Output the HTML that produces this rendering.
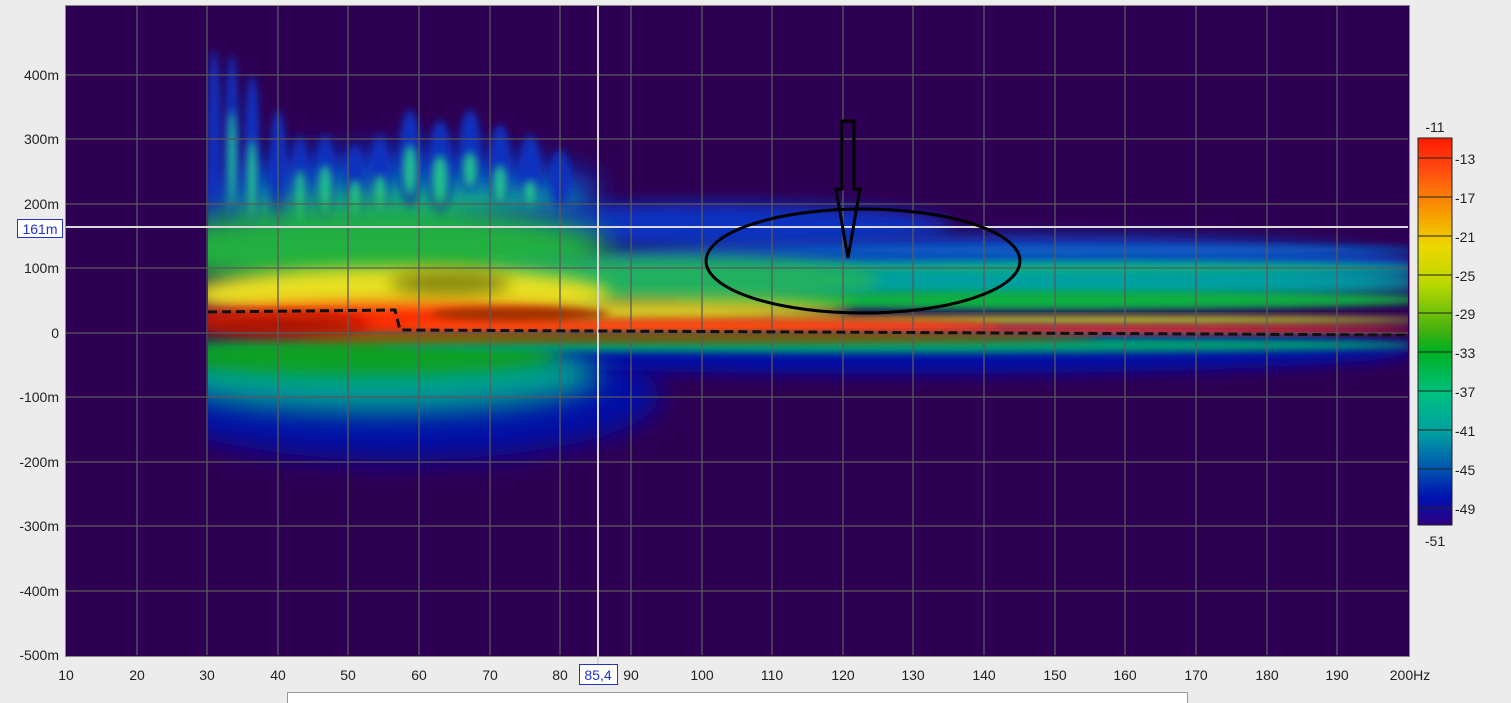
<!DOCTYPE html>
<html><head><style>
html,body{margin:0;padding:0;background:#ececec;width:1511px;height:703px;overflow:hidden;font-family:"Liberation Sans",sans-serif;}
</style></head><body>
<svg width="1511" height="703" xmlns="http://www.w3.org/2000/svg" font-family="Liberation Sans, sans-serif">
<defs>
<filter id="b8" x="-50%" y="-50%" width="200%" height="200%"><feGaussianBlur stdDeviation="8"/></filter>
<filter id="b4" x="-50%" y="-50%" width="200%" height="200%"><feGaussianBlur stdDeviation="4"/></filter>
<filter id="b14" x="-50%" y="-50%" width="200%" height="200%"><feGaussianBlur stdDeviation="14"/></filter>
<clipPath id="cp"><rect x="208" y="6" width="1200" height="649"/></clipPath>
<linearGradient id="cb" x1="0" y1="0" x2="0" y2="1">
<stop offset="0" stop-color="#ff1a00"/><stop offset="0.08" stop-color="#ff4a10"/>
<stop offset="0.2" stop-color="#f7a000"/><stop offset="0.28" stop-color="#ecd800"/>
<stop offset="0.38" stop-color="#b8d800"/><stop offset="0.5" stop-color="#40b010"/>
<stop offset="0.55" stop-color="#00b020"/><stop offset="0.66" stop-color="#00c080"/>
<stop offset="0.76" stop-color="#00a0a0"/><stop offset="0.86" stop-color="#0050b0"/>
<stop offset="0.93" stop-color="#0010b0"/><stop offset="1" stop-color="#300080"/>
</linearGradient>
</defs>
<rect x="0" y="0" width="1511" height="703" fill="#ececec"/>
<rect x="65" y="5" width="1345" height="652" fill="#2e0053"/>
<g clip-path="url(#cp)">
 <!-- lower blue -->
 <ellipse cx="400" cy="395" rx="260" ry="65" fill="#0010a8" filter="url(#b14)"/>
 <ellipse cx="900" cy="350" rx="520" ry="24" fill="#0010a8" filter="url(#b8)"/>
 <ellipse cx="380" cy="375" rx="220" ry="38" fill="#00a090" filter="url(#b14)"/>
 <ellipse cx="360" cy="355" rx="200" ry="20" fill="#10a020" filter="url(#b8)"/>
 <ellipse cx="900" cy="345" rx="520" ry="8" fill="#00a070" filter="url(#b4)"/>
 <!-- upper blue/green cloud -->
 <ellipse cx="400" cy="190" rx="200" ry="40" fill="#1030c0" filter="url(#b14)"/>
 <ellipse cx="400" cy="205" rx="190" ry="25" fill="#10a0a0" filter="url(#b14)"/>
 <!-- fingers -->
 <g fill="#1030c0" filter="url(#b4)">
  <ellipse cx="214" cy="150" rx="7" ry="100"/><ellipse cx="232" cy="150" rx="7" ry="95"/>
  <ellipse cx="252" cy="160" rx="8" ry="85"/><ellipse cx="278" cy="180" rx="9" ry="70"/>
  <ellipse cx="300" cy="190" rx="9" ry="55"/><ellipse cx="325" cy="180" rx="10" ry="45"/>
  <ellipse cx="355" cy="185" rx="10" ry="40"/><ellipse cx="380" cy="175" rx="10" ry="40"/>
  <ellipse cx="410" cy="160" rx="11" ry="50"/><ellipse cx="440" cy="170" rx="12" ry="50"/>
  <ellipse cx="470" cy="150" rx="11" ry="40"/><ellipse cx="500" cy="165" rx="11" ry="40"/>
  <ellipse cx="530" cy="170" rx="11" ry="35"/><ellipse cx="560" cy="180" rx="10" ry="30"/>
 </g>
 <g fill="#20c090" filter="url(#b4)">
  <ellipse cx="232" cy="160" rx="4" ry="50"/><ellipse cx="252" cy="180" rx="5" ry="40"/>
  <ellipse cx="300" cy="200" rx="6" ry="30"/><ellipse cx="325" cy="190" rx="7" ry="25"/>
  <ellipse cx="355" cy="200" rx="7" ry="20"/><ellipse cx="380" cy="195" rx="7" ry="20"/>
  <ellipse cx="410" cy="170" rx="7" ry="25"/><ellipse cx="440" cy="180" rx="8" ry="25"/>
  <ellipse cx="470" cy="170" rx="7" ry="18"/><ellipse cx="500" cy="185" rx="7" ry="20"/>
  <ellipse cx="530" cy="195" rx="7" ry="15"/>
 </g>
 <!-- mid/right stripes -->
 <ellipse cx="700" cy="225" rx="250" ry="22" fill="#1030c0" filter="url(#b8)"/>
 <ellipse cx="1000" cy="265" rx="420" ry="30" fill="#1040c0" filter="url(#b8)"/>
 <ellipse cx="1050" cy="282" rx="380" ry="20" fill="#00a0a0" filter="url(#b8)"/>
 <ellipse cx="1050" cy="300" rx="380" ry="9" fill="#10b040" filter="url(#b4)"/>
 <ellipse cx="1100" cy="268" rx="330" ry="5" fill="#10b080" filter="url(#b4)"/>
 <ellipse cx="1100" cy="250" rx="330" ry="4" fill="#1060c0" filter="url(#b4)"/>
 <!-- green main -->
 <ellipse cx="380" cy="250" rx="230" ry="45" fill="#20b040" filter="url(#b14)"/>
 <ellipse cx="660" cy="280" rx="220" ry="25" fill="#20b060" filter="url(#b8)"/>
 <!-- yellow -->
 <ellipse cx="400" cy="295" rx="210" ry="28" fill="#e8e020" filter="url(#b8)"/>
 <ellipse cx="650" cy="312" rx="200" ry="13" fill="#e0d020" filter="url(#b8)"/>
 <ellipse cx="1100" cy="320" rx="330" ry="4" fill="#c8d020" filter="url(#b4)"/>
 <ellipse cx="450" cy="283" rx="60" ry="13" fill="#8a8a10" filter="url(#b8)"/>
 <!-- red -->
 <ellipse cx="380" cy="320" rx="200" ry="16" fill="#ff2a00" filter="url(#b8)"/>
 <ellipse cx="700" cy="326" rx="300" ry="7" fill="#ff4a10" filter="url(#b4)"/>
 <ellipse cx="1100" cy="330" rx="320" ry="4" fill="#ff4020" filter="url(#b4)"/>
 <ellipse cx="280" cy="325" rx="90" ry="10" fill="#a01000" filter="url(#b8)"/>
 <ellipse cx="520" cy="314" rx="90" ry="7" fill="#a03000" filter="url(#b4)"/>
 <ellipse cx="700" cy="338" rx="400" ry="5" fill="#806000" filter="url(#b4)"/>
</g>
<!-- grid -->
<g stroke="#5a5a5a" stroke-width="1.3">
 <line x1="137" y1="6" x2="137" y2="655"/><line x1="207" y1="6" x2="207" y2="655"/>
 <line x1="278" y1="6" x2="278" y2="655"/><line x1="348" y1="6" x2="348" y2="655"/>
 <line x1="419" y1="6" x2="419" y2="655"/><line x1="490" y1="6" x2="490" y2="655"/>
 <line x1="560" y1="6" x2="560" y2="655"/><line x1="631" y1="6" x2="631" y2="655"/>
 <line x1="702" y1="6" x2="702" y2="655"/><line x1="772" y1="6" x2="772" y2="655"/>
 <line x1="843" y1="6" x2="843" y2="655"/><line x1="913" y1="6" x2="913" y2="655"/>
 <line x1="984" y1="6" x2="984" y2="655"/><line x1="1055" y1="6" x2="1055" y2="655"/>
 <line x1="1125" y1="6" x2="1125" y2="655"/><line x1="1196" y1="6" x2="1196" y2="655"/>
 <line x1="1267" y1="6" x2="1267" y2="655"/><line x1="1337" y1="6" x2="1337" y2="655"/>
 <line x1="66" y1="75" x2="1408" y2="75"/><line x1="66" y1="139" x2="1408" y2="139"/>
 <line x1="66" y1="204" x2="1408" y2="204"/><line x1="66" y1="268" x2="1408" y2="268"/>
 <line x1="66" y1="333" x2="1408" y2="333"/><line x1="66" y1="397" x2="1408" y2="397"/>
 <line x1="66" y1="462" x2="1408" y2="462"/><line x1="66" y1="526" x2="1408" y2="526"/>
 <line x1="66" y1="591" x2="1408" y2="591"/>
</g>
<rect x="65.5" y="5.5" width="1344" height="651" fill="none" stroke="#888" stroke-width="1"/>
<!-- cursor -->
<line x1="66" y1="227" x2="1408" y2="227" stroke="#d8d8d8" stroke-width="2"/>
<line x1="598" y1="6" x2="598" y2="665" stroke="#d8d8d8" stroke-width="2"/>
<!-- dashed -->
<polyline points="208,312 395,310 400,330 1408,335" fill="none" stroke="#111" stroke-width="3" stroke-dasharray="9,5"/>
<!-- ellipse & arrow -->
<ellipse cx="863" cy="261" rx="157" ry="52" fill="none" stroke="#000" stroke-width="3"/>
<path d="M842 121 H854 V189 H860 L848 258 L836 189 H842 Z" fill="none" stroke="#000" stroke-width="3"/>
<!-- y labels -->
<g font-size="14" fill="#222" text-anchor="end">
 <text x="59" y="80">400m</text><text x="59" y="144">300m</text><text x="59" y="209">200m</text>
 <text x="59" y="273">100m</text><text x="59" y="338">0</text><text x="59" y="402">-100m</text>
 <text x="59" y="467">-200m</text><text x="59" y="531">-300m</text><text x="59" y="596">-400m</text>
 <text x="59" y="660">-500m</text>
</g>
<rect x="17.5" y="219.5" width="45" height="18" fill="#fff" stroke="#2233cc"/>
<text x="40" y="234" font-size="14" fill="#2233cc" text-anchor="middle">161m</text>
<!-- x labels -->
<g font-size="14" fill="#222" text-anchor="middle">
 <text x="66" y="680">10</text><text x="137" y="680">20</text><text x="207" y="680">30</text>
 <text x="278" y="680">40</text><text x="348" y="680">50</text><text x="419" y="680">60</text>
 <text x="490" y="680">70</text><text x="560" y="680">80</text><text x="631" y="680">90</text>
 <text x="702" y="680">100</text><text x="772" y="680">110</text><text x="843" y="680">120</text>
 <text x="913" y="680">130</text><text x="984" y="680">140</text><text x="1055" y="680">150</text>
 <text x="1125" y="680">160</text><text x="1196" y="680">170</text><text x="1267" y="680">180</text>
 <text x="1337" y="680">190</text><text x="1410" y="680">200Hz</text>
</g>
<rect x="579.5" y="664.5" width="38" height="20" fill="#fff" stroke="#2233cc"/>
<text x="598" y="680" font-size="14" fill="#2233cc" text-anchor="middle">85,4</text>
<!-- bottom panel -->
<rect x="287.5" y="692.5" width="900" height="20" fill="#fff" stroke="#999"/>
<!-- colorbar -->
<rect x="1418" y="138" width="34" height="387" fill="url(#cb)" stroke="#222"/>
<g stroke="#222" stroke-width="1">
 <line x1="1418" y1="158" x2="1452" y2="158"/><line x1="1418" y1="197" x2="1452" y2="197"/>
 <line x1="1418" y1="236" x2="1452" y2="236"/><line x1="1418" y1="275" x2="1452" y2="275"/>
 <line x1="1418" y1="313" x2="1452" y2="313"/><line x1="1418" y1="352" x2="1452" y2="352"/>
 <line x1="1418" y1="391" x2="1452" y2="391"/><line x1="1418" y1="430" x2="1452" y2="430"/>
 <line x1="1418" y1="469" x2="1452" y2="469"/><line x1="1418" y1="508" x2="1452" y2="508"/>
</g>
<g font-size="14" fill="#222">
 <text x="1435" y="132" text-anchor="middle">-11</text>
 <text x="1455" y="164">-13</text><text x="1455" y="203">-17</text><text x="1455" y="242">-21</text>
 <text x="1455" y="281">-25</text><text x="1455" y="319">-29</text><text x="1455" y="358">-33</text>
 <text x="1455" y="397">-37</text><text x="1455" y="436">-41</text><text x="1455" y="475">-45</text>
 <text x="1455" y="514">-49</text>
 <text x="1435" y="546" text-anchor="middle">-51</text>
</g>
</svg>
</body></html>
